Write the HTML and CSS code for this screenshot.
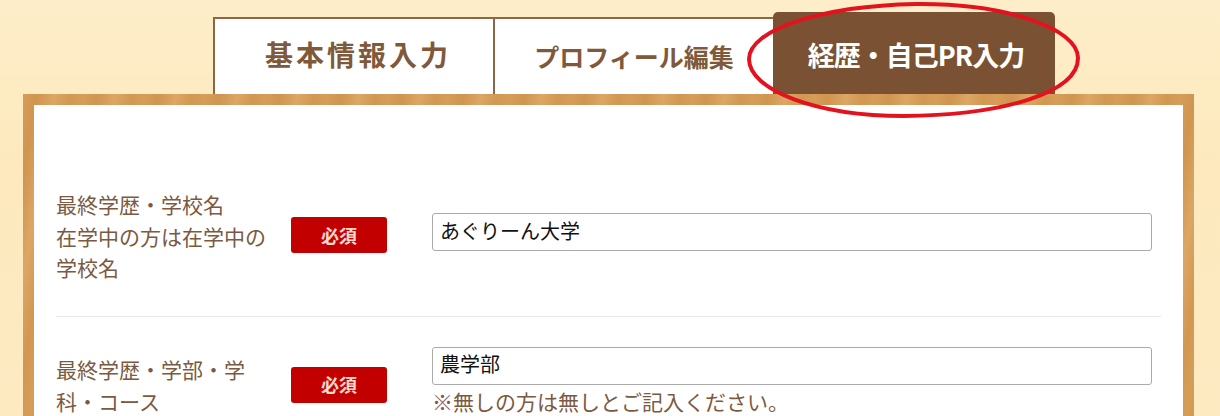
FILE: index.html
```html
<!DOCTYPE html>
<html lang="ja">
<head>
	<meta charset="utf-8">
	<title>経歴・自己PR入力</title>
	<link rel="stylesheet" href="styles.css">
</head>
<body>
<div class="page">
	<ul class="tabs">
		<li class="tab tab1">基本情報入力</li>
		<li class="tab tab2">プロフィール編集</li>
		<li class="tab tab3">経歴・自己PR入力</li>
	</ul>
	<div class="frame">
		<form>
			<div class="row">
				<label class="rowLabel">最終学歴・学校名<br>在学中の方は在学中の<br>学校名</label>
				<span class="must">必須</span>
				<div class="field">
					<input class="fText" type="text" value="あぐりーん大学">
				</div>
			</div>
			<div class="row">
				<label class="rowLabel">最終学歴・学部・学<br>科・コース</label>
				<span class="must">必須</span>
				<div class="field">
					<input class="fText" type="text" value="農学部">
					<p class="note">※無しの方は無しとご記入ください。</p>
				</div>
			</div>
		</form>
	</div>
	<svg class="circle" width="340" height="122" viewBox="0 0 340 122">
		<path d="M172 4C260 3 334 28 334 58C334 92 262 115 160 116C72 116 5 90 5 59C5 30 76 6 172 4Z"/>
	</svg>
</div>
</body>
</html>
```

FILE: styles.css
```css
html,body,ul,li,p{margin:0;padding:0;}
ul{list-style-type:none;}
body{color:#7b5a41;background:#fde9bf;font:21px/1.5 "Noto Sans CJK JP","Liberation Sans",sans-serif;}
.page{position:relative;height:416px;overflow:hidden;padding-top:12px;box-sizing:border-box;background:linear-gradient(180deg,#fdeec9 0,#fde9bd 40%,#fdeac2 100%);}
.tabs{display:flex;align-items:flex-end;margin-left:213px;}
.tab{display:flex;align-items:center;justify-content:center;box-sizing:border-box;font-weight:700;color:#80593a;background:#fff;}
.tab1{width:282px;height:77px;border:solid #8b6647;border-width:2px 2px 0 2px;font-size:28px;letter-spacing:3px;padding:0 0 5px 8px;}
.tab2{width:278px;height:77px;border-top:2px solid #8b6647;font-size:25px;letter-spacing:0;}
.tab3{width:282px;height:82px;background:#7a5233;color:#fff;font-size:27px;letter-spacing:-1px;border-radius:5px 5px 0 0;padding:5px 0 0 4px;}
.frame{margin:0 26px 0 23px;background:#fff;border:11px solid #d49b58;border-bottom:0;border-image:repeating-linear-gradient(100deg,#d69d59 0,#d09550 14px,#dca665 31px,#d29852 47px,#d69d59 60px) 11;padding:50px 22px 0;}
.row{display:flex;align-items:center;padding:30px 0;border-bottom:1px solid #e8e8e8;}
.rowLabel{width:235px;flex:none;padding:4px 0 2px;}
.must{width:96px;height:36px;flex:none;display:flex;align-items:center;justify-content:center;background:#c30000;border-radius:3px;color:#fbd9d0;font-size:18px;font-weight:700;}
.field{margin-left:45px;width:720px;padding-bottom:6px;}
.fText{display:block;width:100%;height:38px;box-sizing:border-box;border:1px solid #aaa;border-radius:3px;padding:0 8px 4px 7px;font:20px "Noto Sans CJK JP","Liberation Sans",sans-serif;color:#111;background:#fff;}
.note{line-height:32px;}
.circle{position:absolute;left:744px;top:0;}
.circle path{fill:none;stroke:#e2131f;stroke-width:4;}
```
